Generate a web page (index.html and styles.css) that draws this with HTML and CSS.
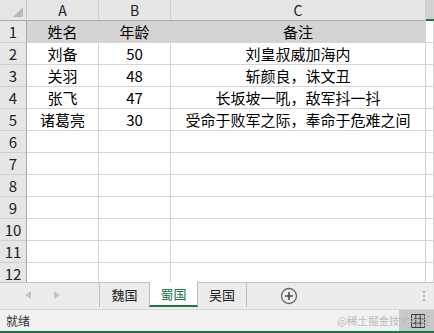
FILE: index.html
```html
<!DOCTYPE html>
<html lang="zh">
<head>
<meta charset="utf-8">
<link rel="stylesheet" href="styles.css">
</head>
<body>
<div class="app">
  <div class="sheet">
    <div class="grid">
      <div class="corner"><svg width="10" height="10" viewBox="0 0 10 10"><polygon points="10,0 10,10 0,10" fill="#b9b9b9"/></svg></div>
      <div class="colh">A</div>
      <div class="colh">B</div>
      <div class="colh">C</div>
      <div class="colh sel"></div>

      <div class="rowh">1</div>
      <div class="cell hd">姓名</div>
      <div class="cell hd">年龄</div>
      <div class="cell hd">备注</div>
      <div class="cell"></div>

      <div class="rowh">2</div>
      <div class="cell">刘备</div>
      <div class="cell">50</div>
      <div class="cell">刘皇叔威加海内</div>
      <div class="cell"></div>

      <div class="rowh">3</div>
      <div class="cell">关羽</div>
      <div class="cell">48</div>
      <div class="cell">斩颜良，诛文丑</div>
      <div class="cell"></div>

      <div class="rowh">4</div>
      <div class="cell">张飞</div>
      <div class="cell">47</div>
      <div class="cell">长坂坡一吼，敌军抖一抖</div>
      <div class="cell"></div>

      <div class="rowh">5</div>
      <div class="cell">诸葛亮</div>
      <div class="cell">30</div>
      <div class="cell">受命于败军之际，奉命于危难之间</div>
      <div class="cell"></div>

      <div class="rowh">6</div><div class="cell"></div><div class="cell"></div><div class="cell"></div><div class="cell"></div>
      <div class="rowh">7</div><div class="cell"></div><div class="cell"></div><div class="cell"></div><div class="cell"></div>
      <div class="rowh">8</div><div class="cell"></div><div class="cell"></div><div class="cell"></div><div class="cell"></div>
      <div class="rowh">9</div><div class="cell"></div><div class="cell"></div><div class="cell"></div><div class="cell"></div>
      <div class="rowh">10</div><div class="cell"></div><div class="cell"></div><div class="cell"></div><div class="cell"></div>
      <div class="rowh">11</div><div class="cell"></div><div class="cell"></div><div class="cell"></div><div class="cell"></div>
      <div class="rowh">12</div><div class="cell"></div><div class="cell"></div><div class="cell"></div><div class="cell"></div>
    </div>
  </div>

  <div class="tabbar">
    <div class="nav">
      <svg class="arr" width="6" height="8" viewBox="0 0 6 8"><polygon points="6,0 6,8 0,4" fill="#c4c4c4"/></svg>
      <svg class="arr" width="6" height="8" viewBox="0 0 6 8"><polygon points="0,0 0,8 6,4" fill="#c4c4c4"/></svg>
    </div>
    <div class="tab">魏国</div>
    <div class="tab active">蜀国</div>
    <div class="tab last">吴国</div>
    <div class="add">
      <svg width="18" height="18" viewBox="0 0 18 18"><circle cx="9" cy="9" r="7.5" fill="none" stroke="#6a6a6a" stroke-width="1.3"/><path d="M9 5v8M5 9h8" stroke="#4a4a4a" stroke-width="1.6"/></svg>
    </div>
    <div class="dots"><span></span><span></span><span></span></div>
  </div>

  <div class="status">
    <span class="ready">就绪</span>
    <span class="mark">@稀土掘金技术社区</span>
    <div class="view">
      <svg width="14" height="14" viewBox="0 0 14 14"><path d="M0.5 0.5h13v13h-13zM0.5 4.8h13M0.5 9.2h13M4.8 0.5v13M9.2 0.5v13" fill="none" stroke="#3c3c3c" stroke-width="1"/></svg>
    </div>
  </div>
</div>
</body>
</html>
```

FILE: styles.css
```css
* { box-sizing: border-box; }
html, body { margin: 0; padding: 0; }
body {
  width: 434px;
  height: 333px;
  overflow: hidden;
  background: #fff;
  font-family: "Noto Sans CJK SC", "Noto Sans", sans-serif;
  color: #000;
}
.app {
  display: flex;
  flex-direction: column;
  height: 333px;
}
.sheet {
  height: 282px;
  overflow: hidden;
  flex: none;
}
.grid {
  display: grid;
  grid-template-columns: 27px 72px 72px 255px 8px;
  grid-template-rows: 21px repeat(12, 22px);
}
.corner {
  background: #e6e6e6;
  border-right: 1px solid #c6c6c6;
  border-bottom: 1px solid #a9a9a9;
  display: flex;
  align-items: flex-end;
  justify-content: flex-end;
  padding: 0 3px 3px 0;
}
.colh {
  background: #e6e6e6;
  border-right: 1px solid #cfcfcf;
  border-bottom: 1px solid #a9a9a9;
  font-size: 14px;
  line-height: 20px;
  text-align: center;
  color: #222;
}
.colh.sel {
  background: #d2d2d2;
  border-right: none;
  border-bottom: 2px solid #217346;
}
.rowh {
  background: #e6e6e6;
  border-right: 1px solid #a9a9a9;
  border-bottom: 1px solid #cfcfcf;
  font-size: 15px;
  line-height: 21px;
  text-align: center;
  color: #222;
}
.cell {
  border-right: 1px solid #d4d4d4;
  border-bottom: 1px solid #d4d4d4;
  font-size: 15px;
  line-height: 21px;
  text-align: center;
  white-space: nowrap;
  overflow: hidden;
}
.cell.hd {
  background: #d4d4d4;
  border-right-color: #d4d4d4;
  border-bottom-color: #d4d4d4;
}
.tabbar {
  height: 27px;
  flex: none;
  background: #ececec;
  border-top: 1px solid #c2c2c2;
  display: flex;
  align-items: flex-start;
}
.nav {
  width: 100px;
  height: 24px;
  border-right: 1px solid #bdbdbd;
  display: flex;
  align-items: center;
  padding-left: 25px;
  gap: 23px;
}
.tab {
  width: 49px;
  height: 24px;
  font-size: 13px;
  line-height: 23px;
  text-align: center;
  color: #222;
}
.tab.active {
  background: #fff;
  color: #217346;
  border-bottom: 2px solid #217346;
  border-left: 1px solid #bdbdbd;
  border-right: 1px solid #bdbdbd;
  margin-top: -1px;
  height: 25px;
}
.tab.last {
  border-right: 1px solid #bdbdbd;
}
.add {
  width: 84px;
  height: 26px;
  display: flex;
  align-items: center;
  justify-content: center;
}
.dots {
  margin-left: auto;
  width: 21px;
  height: 26px;
  display: flex;
  flex-direction: column;
  align-items: center;
  justify-content: center;
  gap: 2px;
}
.dots span {
  width: 2px;
  height: 2px;
  background: #b4b4b4;
}
.status {
  flex: 1;
  background: #f1f1f1;
  border-top: 1px solid #d6d6d6;
  border-bottom: 2px solid #217346;
  display: flex;
  align-items: center;
  position: relative;
}
.ready {
  font-size: 12px;
  padding-left: 6px;
  color: #333;
}
.mark {
  position: absolute;
  right: 3px;
  top: 3px;
  font-size: 10.5px;
  color: #bcbcbc;
  z-index: 2;
  letter-spacing: 0;
}
.view {
  margin-left: auto;
  width: 35px;
  height: 100%;
  background: #c8c8c8;
  display: flex;
  align-items: center;
  justify-content: flex-end;
  padding-right: 9px;
}
```
